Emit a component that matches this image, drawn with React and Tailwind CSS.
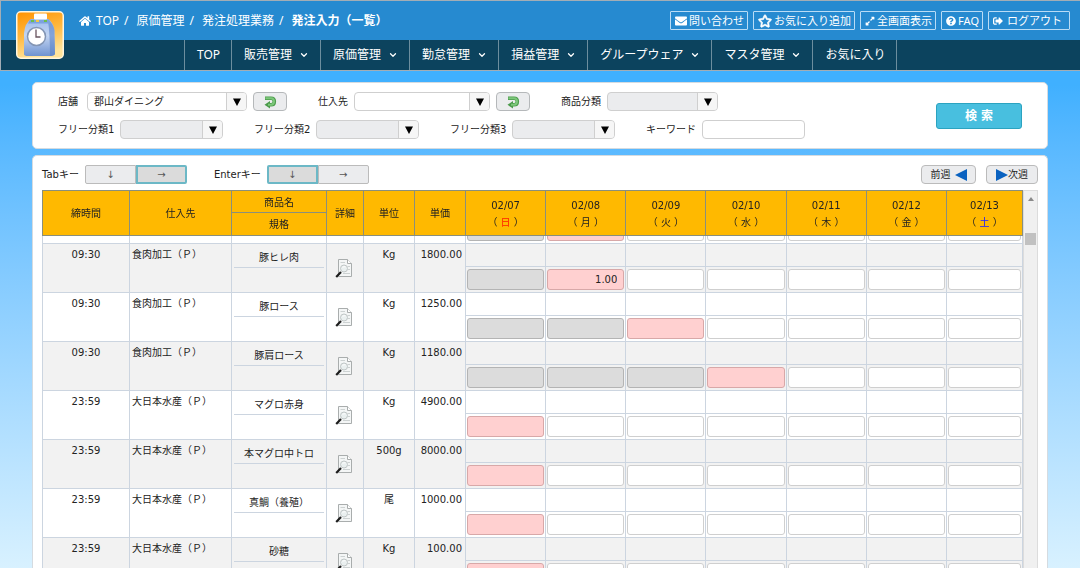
import { useLayoutEffect, useRef, useState } from 'react';
import {
  FaHome,
  FaEnvelope,
  FaRegStar,
  FaExpandAlt,
  FaQuestionCircle,
  FaSignOutAlt,
} from 'react-icons/fa';
import { FiChevronDown } from 'react-icons/fi';

const navItems = [
  { label: 'TOP', menu: false },
  { label: '販売管理', menu: true },
  { label: '原価管理', menu: true },
  { label: '勤怠管理', menu: true },
  { label: '損益管理', menu: true },
  { label: 'グループウェア', menu: true },
  { label: 'マスタ管理', menu: true },
  { label: 'お気に入り', menu: false },
];

const days = [
  { date: '02/07', day: '日', color: 'text-[#ff2000]' },
  { date: '02/08', day: '月', color: '' },
  { date: '02/09', day: '火', color: '' },
  { date: '02/10', day: '水', color: '' },
  { date: '02/11', day: '木', color: '' },
  { date: '02/12', day: '金', color: '' },
  { date: '02/13', day: '土', color: 'text-[#2020ff]' },
];

// closed: number of days already past the deadline, the next day is the order day
const rows = [
  { time: '', supplier: '', name: '', unit: '', price: '', closed: 1 },
  { time: '09:30', supplier: '食肉加工（Ｐ）', name: '豚ヒレ肉', unit: 'Kg', price: '1800.00', closed: 1, qty: '1.00' },
  { time: '09:30', supplier: '食肉加工（Ｐ）', name: '豚ロース', unit: 'Kg', price: '1250.00', closed: 2 },
  { time: '09:30', supplier: '食肉加工（Ｐ）', name: '豚肩ロース', unit: 'Kg', price: '1180.00', closed: 3 },
  { time: '23:59', supplier: '大日本水産（Ｐ）', name: 'マグロ赤身', unit: 'Kg', price: '4900.00', closed: 0 },
  { time: '23:59', supplier: '大日本水産（Ｐ）', name: '本マグロ中トロ', unit: '500g', price: '8000.00', closed: 0 },
  { time: '23:59', supplier: '大日本水産（Ｐ）', name: '真鯛（養殖）', unit: '尾', price: '1000.00', closed: 0 },
  { time: '23:59', supplier: '大日本水産（Ｐ）', name: '砂糖', unit: 'Kg', price: '100.00', closed: 0 },
];

const Logo = () => (
  <svg viewBox="0 0 48 48" className="w-12 h-12">
    <defs>
      <linearGradient id="logoBg" x1="0" y1="0" x2="0.3" y2="1">
        <stop offset="0" stopColor="#ff9200" />
        <stop offset="0.5" stopColor="#ffb63c" />
        <stop offset="1" stopColor="#ffe39a" />
      </linearGradient>
      <linearGradient id="logoBody" x1="0" y1="0" x2="0" y2="1">
        <stop offset="0" stopColor="#9fbdec" />
        <stop offset="0.45" stopColor="#c3d5f2" />
        <stop offset="1" stopColor="#6f93d0" />
      </linearGradient>
    </defs>
    <rect x="0.75" y="0.75" width="46.5" height="46.5" rx="4" fill="url(#logoBg)" stroke="#fff6e0" strokeWidth="1.5" />
    <path d="M8 43 L8 22 Q9 12 15 8 L32 8 Q37 11 38.5 19 L39 43 Q38 45 33 45 L12 45 Q8 45 8 43 Z" fill="url(#logoBody)" />
    <path d="M32 9 Q37 12 38.5 19 L39 43 Q38 45 34 45 Q34 25 32 9 Z" fill="#5a82c8" opacity="0.6" />
    <path d="M14 8.5 H33 L35 12.5 H12 Z" fill="#7da2de" />
    <rect x="15" y="9" width="3" height="2" fill="#6cc04a" />
    <rect x="20" y="9" width="3" height="2" fill="#f4c842" />
    <rect x="28" y="9" width="3" height="2" fill="#6cc04a" />
    <rect x="18" y="2.5" width="13" height="6" rx="1" fill="#fff" />
    <circle cx="20.5" cy="25.5" r="9" fill="#fff" stroke="#8496b4" strokeWidth="1.5" />
    <path d="M20 18.5 V26 H24.5" fill="none" stroke="#6a5560" strokeWidth="1.3" />
  </svg>
);

const ReturnIcon = () => (
  <svg viewBox="0 0 14 14" className="w-3.5 h-3.5">
    <path d="M2 3.2 H8 Q11.3 3.2 11.3 6.4 Q11.3 9.8 8 9.8 H6" fill="none" stroke="#4b9a4b" strokeWidth="3.6" />
    <path d="M7 6 L7 13.5 L1.5 9.8 Z" fill="#4b9a4b" />
    <path d="M2.4 3.2 H8 Q11 3.4 11 6.4 Q11 9.4 8 9.7 H5" fill="none" stroke="#7cc77a" strokeWidth="2" />
  </svg>
);

const DetailIcon = () => (
  <svg viewBox="0 0 18 20" className="w-[18px] h-5">
    <path d="M3.5 1.5 H12.5 L16.5 5.5 V18.5 H3.5 Z" fill="#f4f6f6" stroke="#a9adad" />
    <path d="M12.5 1.5 V5.5 H16.5" fill="#fff" stroke="#a9adad" />
    <path d="M5.5 4.5 H10 M12.5 8.5 H15 M12.5 11.5 H15 M8 15.5 H15" stroke="#cdd2d2" />
    <circle cx="9" cy="10.5" r="3.5" fill="#eaf0f0" stroke="#c0c6c6" />
    <path d="M7.5 9.5 Q9 8 10.5 9" fill="none" stroke="#fff" />
    <path d="M6 14 L1.2 19" stroke="#1c1c1c" strokeWidth="2.2" />
  </svg>
);

const HeaderButton = ({ icon, children, className }) => (
  <button
    type="button"
    className={`h-[19px] flex items-center gap-0.5 border border-[#b9dcf6] rounded-[1px] text-[11px] leading-4 text-white whitespace-nowrap ${className}`}
  >
    {icon}
    {children}
  </button>
);

const Combo = ({ id, label, labelClass, className, value, disabled }) => (
  <div className="flex items-center">
    <label htmlFor={id} className={`whitespace-nowrap ${labelClass}`}>
      {label}
    </label>
    <div
      className={`flex h-[19px] border border-[#cfcfcf] rounded-sm overflow-hidden ${className} ${
        disabled ? 'bg-[#ebecee]' : 'bg-white'
      }`}
    >
      <select
        id={id}
        disabled={disabled}
        className="appearance-none flex-1 min-w-0 pl-1.5 leading-4 text-[#222] outline-none"
      >
        <option>{value}</option>
      </select>
      <span className="w-5 flex items-center justify-center border-l border-[#cfcfcf] bg-[#f6f6f6] pointer-events-none">
        <svg viewBox="0 0 8 8" className="w-2 h-2">
          <path d="M0 0.5 H8 L4 8 Z" fill="#000" />
        </svg>
      </span>
    </div>
  </div>
);

const ReturnButton = ({ label }) => (
  <button
    type="button"
    aria-label={label}
    className="ml-1.5 w-[34px] h-[19px] flex items-center justify-center border border-[#b5b8ba] rounded-sm bg-[#ebecee]"
  >
    <ReturnIcon />
  </button>
);

const KeyToggle = ({ label, value, onChange }) => (
  <div className="flex items-center">
    <span className="mr-1.5">{label}</span>
    {['↓', '→'].map((key) => (
      <button
        key={key}
        type="button"
        onClick={() => onChange(key)}
        className={`w-[51px] h-[19px] leading-4 text-[#555] ${
          value === key
            ? 'border-2 border-[#6cb8c6] bg-[#dbdbdb]'
            : 'border border-[#bbbbbb] bg-[#ebecee]'
        } ${key === '↓' ? 'rounded-l-xs' : 'rounded-r-xs'}`}
      >
        {key}
      </button>
    ))}
  </div>
);

const th = 'border-r border-b border-[#8a8f7c] bg-[#ffb900] font-normal p-0 pt-0.5 text-center';
const td = 'border-r border-b border-[#ccd5e0] p-0';

const OrderRow = ({ row, index }) => {
  const bg = index % 2 === 1 ? 'bg-[#f2f2f2]' : 'bg-white';
  const cellColor = (i) => {
    if (i < row.closed) return 'bg-[#dcdcdc] border-[#b4b4b4]';
    if (i === row.closed) return 'bg-[#ffd0d0] border-[#d8a8a8]';
    return 'bg-white border-[#cfcfcf]';
  };

  return (
    <tbody className={bg}>
      <tr className="h-[23px]">
        <td rowSpan={2} className={`${td} border-l pt-1 align-top text-center`}>{row.time}</td>
        <td rowSpan={2} className={`${td} pt-1 pl-0.5 align-top whitespace-nowrap`}>{row.supplier}</td>
        <td rowSpan={2} className={`${td} px-0.5 align-top text-center whitespace-nowrap`}>
          <div className="h-6 pt-[7px] border-b border-[#ccd5e0]">{row.name}</div>
        </td>
        <td rowSpan={2} className={`${td} pr-0.5`}>
          <button type="button" aria-label="詳細" className="block mx-auto">
            <DetailIcon />
          </button>
        </td>
        <td rowSpan={2} className={`${td} pt-1 align-top text-center`}>{row.unit}</td>
        <td rowSpan={2} className={`${td} pt-1 pr-[3px] align-top text-right`}>{row.price}</td>
        {days.map((d) => (
          <td key={d.date} className={td}></td>
        ))}
      </tr>
      <tr className="h-[26px]">
        {days.map((d, i) => (
          <td key={d.date} className={`${td} px-px`}>
            <input
              type="text"
              aria-label={d.date}
              defaultValue={i === row.closed ? row.qty : ''}
              disabled={i < row.closed}
              className={`block w-full h-[21px] border rounded-[3px] pr-1.5 text-right outline-none ${cellColor(i)}`}
            />
          </td>
        ))}
      </tr>
    </tbody>
  );
};

const OrderTable = () => {
  const scroller = useRef(null);

  useLayoutEffect(() => {
    scroller.current.scrollTop = 41;
  }, []);

  return (
    <div className="flex-1 min-h-0 flex">
      <div ref={scroller} className="flex-1 min-w-0 overflow-y-auto [scrollbar-width:none]">
        <table className="w-full table-fixed border-separate border-spacing-0">
          <colgroup>
            <col className="w-[88px]" />
            <col className="w-[102px]" />
            <col className="w-[95px]" />
            <col className="w-[37px]" />
            <col className="w-[51px]" />
            <col className="w-[51px]" />
            <col />
            <col />
            <col />
            <col />
            <col />
            <col />
            <col className="w-[76px]" />
          </colgroup>
          <thead className="sticky top-0 z-10">
            <tr className="h-[23px]">
              <th rowSpan={2} className={`${th} border-t border-l`}>締時間</th>
              <th rowSpan={2} className={`${th} border-t`}>仕入先</th>
              <th className={`${th} border-t`}>商品名</th>
              <th rowSpan={2} className={`${th} border-t`}>詳細</th>
              <th rowSpan={2} className={`${th} border-t`}>単位</th>
              <th rowSpan={2} className={`${th} border-t`}>単価</th>
              {days.map((d) => (
                <th key={d.date} rowSpan={2} className={`${th} border-t`}>
                  <div className="leading-[17px]">{d.date}</div>
                  <div className="leading-[17px]">
                    （<span className={d.color}> {d.day} </span>）
                  </div>
                </th>
              ))}
            </tr>
            <tr className="h-[23px]">
              <th className={th}>規格</th>
            </tr>
          </thead>
          {rows.map((row, i) => (
            <OrderRow key={i} row={row} index={i} />
          ))}
        </table>
      </div>
      <div className="w-[15px] border border-b-0 border-[#dcdcdc] bg-[#f0f0f0] flex flex-col items-center pt-1.5">
        <svg viewBox="0 0 6 4" className="w-1.5 h-1">
          <path d="M3 0 L6 4 H0 Z" fill="#8a8a8a" />
        </svg>
        <div className="mt-8 w-[11px] h-3 bg-[#c1c1c1]" />
      </div>
    </div>
  );
};

const App = () => {
  const [tabKey, setTabKey] = useState('→');
  const [enterKey, setEnterKey] = useState('↓');

  return (
    <div className="h-screen overflow-hidden flex flex-col bg-gradient-to-b from-[#40b0ff] from-15% to-[#d8f1ff] text-[10px] leading-[14px] text-[#222] font-['DejaVu_Sans','Noto_Sans_CJK_JP',sans-serif]">
      <header className="relative border-t border-l border-b border-[#a3adb5] text-white text-xs font-['Noto_Sans','Noto_Sans_CJK_JP',sans-serif]">
        <div className="absolute left-[15px] top-2.5">
          <Logo />
        </div>
        <div className="h-[39px] bg-[#268ad0] pl-[78px] pr-[10px] flex items-center justify-between">
          <nav className="flex items-center whitespace-nowrap">
            <FaHome className="w-3 h-3 mr-[5px]" />
            <a href="#top">TOP</a>
            <span className="ml-[5px] mr-2">/</span>
            <a href="#cost">原価管理</a>
            <span className="ml-[5px] mr-2">/</span>
            <a href="#order">発注処理業務</a>
            <span className="ml-[5px] mr-2">/</span>
            <span className="font-bold">発注入力（一覧）</span>
          </nav>
          <div className="flex items-center gap-[5px]">
            <HeaderButton className="pl-1 pr-[3px]" icon={<FaEnvelope className="w-3 h-3" />}>問い合わせ</HeaderButton>
            <HeaderButton className="pl-1 pr-[3px]" icon={<FaRegStar className="w-3.5 h-3.5" strokeWidth="30" stroke="currentColor" />}>お気に入り追加</HeaderButton>
            <HeaderButton className="pl-1 pr-[3px]" icon={<FaExpandAlt className="w-2.5 h-2.5" />}>全画面表示</HeaderButton>
            <HeaderButton className="pl-1 pr-[3px]" icon={<FaQuestionCircle className="w-2.5 h-2.5" />}>FAQ</HeaderButton>
            <HeaderButton className="pl-1 pr-[7px]" icon={<FaSignOutAlt className="w-2.5 h-2.5 mr-0.5" />}>ログアウト</HeaderButton>
          </div>
        </div>
        <nav className="h-[30px] bg-[#0c435e] pl-[183px] flex">
          {navItems.map((item) => (
            <a
              key={item.label}
              href="#menu"
              className="flex items-center pl-3 pr-[11px] border-l border-[#6d8e9e] last:border-r whitespace-nowrap"
            >
              {item.label}
              {item.menu && <FiChevronDown className="ml-[7px] w-2.5 h-2.5" strokeWidth={3} />}
            </a>
          ))}
        </nav>
      </header>

      <main className="flex-1 min-h-0 flex flex-col gap-1.5 pt-[11px] px-8">
        <form className="h-[67px] flex items-center justify-between bg-white rounded-[5px] border border-[#d5dbe0] pl-[25px] pr-[25px]">
          <div className="flex flex-col gap-[9px]">
            <div className="flex items-center gap-[31px]">
              <div className="flex">
                <Combo id="shop" label="店舗" labelClass="w-[29px]" className="w-40" value="郡山ダイニング" />
                <ReturnButton label="店舗" />
              </div>
              <div className="flex">
                <Combo id="supplier" label="仕入先" labelClass="w-9" className="w-[136px]" value="" />
                <ReturnButton label="仕入先" />
              </div>
              <Combo id="category" label="商品分類" labelClass="w-[46px]" className="w-[111px]" value="" disabled />
            </div>
            <div className="flex items-center gap-[31px]">
              <Combo id="free1" label="フリー分類1" labelClass="w-[62px]" className="w-[103px]" value="" disabled />
              <Combo id="free2" label="フリー分類2" labelClass="w-[62px]" className="w-[103px]" value="" disabled />
              <Combo id="free3" label="フリー分類3" labelClass="w-[62px]" className="w-[103px]" value="" disabled />
              <div className="flex items-center">
                <label htmlFor="keyword" className="w-14 whitespace-nowrap">キーワード</label>
                <input
                  id="keyword"
                  type="text"
                  className="w-[103px] h-[19px] px-1.5 border border-[#cfcfcf] rounded-sm bg-white outline-none"
                />
              </div>
            </div>
          </div>
          <button
            type="button"
            className="w-[86px] h-[26px] rounded-[3px] border border-[#2ba3c0] bg-[#48bfdf] text-xs font-bold text-white"
          >
            検 索
          </button>
        </form>

        <section className="flex-1 min-h-0 flex flex-col bg-white rounded-t-[5px] border border-b-0 border-[#d5dbe0] px-[9px] pt-[9px]">
          <div className="flex items-center justify-between mb-1.5">
            <div className="flex gap-[27px]">
              <KeyToggle label="Tabキー" value={tabKey} onChange={setTabKey} />
              <KeyToggle label="Enterキー" value={enterKey} onChange={setEnterKey} />
            </div>
            <div className="flex gap-2.5">
              <button type="button" className="w-[55px] h-[19px] flex items-center justify-center gap-1 border border-[#bbbbbb] rounded-sm bg-[#ebecee]">
                前週
                <svg viewBox="0 0 12 12" className="w-3 h-3">
                  <path d="M12 0 V12 L0 6 Z" fill="#0a62c0" />
                </svg>
              </button>
              <button type="button" className="w-[52px] h-[19px] flex items-center justify-center border border-[#bbbbbb] rounded-sm bg-[#ebecee]">
                <svg viewBox="0 0 12 12" className="w-3 h-3">
                  <path d="M0 0 V12 L12 6 Z" fill="#0a62c0" />
                </svg>
                次週
              </button>
            </div>
          </div>
          <OrderTable />
        </section>
      </main>
    </div>
  );
};

export default App;
